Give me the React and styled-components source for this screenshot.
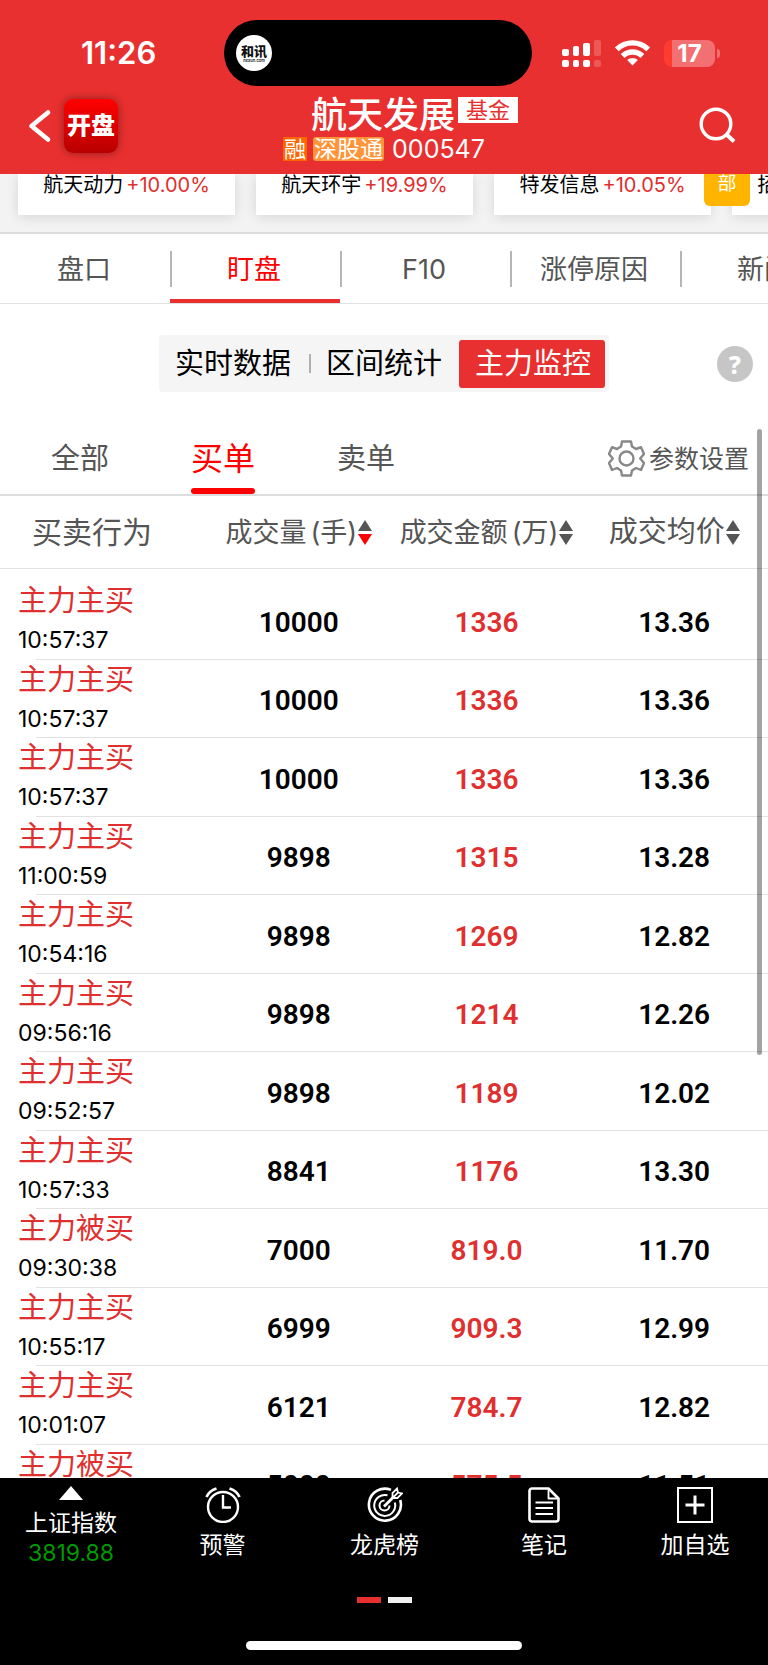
import React from 'react';
import styled, { createGlobalStyle, css } from 'styled-components';

const RED = '#e93030';
const BRIGHT = '#ff0000';
const INK = '#555555';

const Global = createGlobalStyle`
  * { box-sizing: border-box; }
  body { margin: 0; background: #fff; }
  body, button { font-family: Inter, "Noto Sans CJK SC", sans-serif; }
  button { border: 0; padding: 0; background: none; color: inherit; font-size: inherit; cursor: pointer; white-space: nowrap; }
  a { color: inherit; text-decoration: none; }
  svg { display: block; flex: none; }
`;

const Screen = styled.div`
  display: flex;
  flex-direction: column;
  height: 100vh;
  overflow: hidden;
`;

const Header = styled.header`
  flex: none;
  background: ${RED};
  color: #fff;
`;

const StatusBar = styled.div`
  display: grid;
  grid-template-columns: 1fr 308px 1fr;
  align-items: center;
  padding: 20px 12px 0 0;
`;

const Clock = styled.time`
  padding-left: 81px;
  font-size: 31px;
  font-weight: 600;
  line-height: 36px;
`;

const Island = styled.div`
  display: flex;
  align-items: center;
  height: 66px;
  padding-left: 12px;
  border-radius: 33px;
  background: #000;
`;

const IslandLogo = styled.div`
  display: flex;
  flex-direction: column;
  align-items: center;
  justify-content: center;
  width: 36px;
  height: 36px;
  border-radius: 50%;
  background: #fff;
  color: #111;
  font-size: 13px;
  font-weight: 900;
  line-height: 14px;
  small { font-size: 4px; font-weight: 600; line-height: 5px; }
`;

const StatusIcons = styled.div`
  display: flex;
  align-items: center;
  justify-content: space-between;
  width: 158px;
  margin-left: 30px;
`;

const Battery = styled.div`
  display: flex;
  align-items: center;
  gap: 2px;
`;

const BatteryBody = styled.div`
  width: 51px;
  height: 27px;
  border-radius: 8px;
  background: linear-gradient(90deg, #ff3b30 8px, #f27072 8px);
  text-align: center;
  font-size: 24px;
  font-weight: 700;
  line-height: 27px;
`;

const BatteryTip = styled.div`
  width: 3px;
  height: 9px;
  border-radius: 0 4px 4px 0;
  background: #f27072;
`;

const NavBar = styled.div`
  display: grid;
  grid-template-columns: 1fr auto 1fr;
  height: 88px;
`;

const NavLeft = styled.div`
  display: flex;
  align-items: center;
  gap: 12px;
  padding-left: 28px;
  padding-bottom: 8px;
`;

const AppBadge = styled.div`
  width: 54px;
  height: 54px;
  border-radius: 9px;
  background: linear-gradient(#ff0000, #b80000);
  box-shadow: 0 0 8px rgba(0, 0, 0, 0.4);
  text-align: center;
  font-size: 24px;
  font-weight: 900;
  line-height: 54px;
`;

const NavRight = styled.div`
  display: flex;
  align-items: center;
  justify-content: flex-end;
  padding-right: 32px;
  padding-bottom: 10px;
`;

const StockTitle = styled.div`
  display: flex;
  flex-direction: column;
  align-items: center;
  padding-top: 9px;
`;

const TitleLine = styled.div`
  display: flex;
  gap: 3px;
  padding-left: 61px;
  h1 { margin: 0; font-size: 36px; font-weight: 500; line-height: 40px; }
`;

const FundTag = styled.span`
  width: 60px;
  height: 26px;
  margin-top: 2px;
  background: #fff;
  color: ${RED};
  text-align: center;
  font-size: 22px;
  line-height: 26px;
`;

const CodeLine = styled.div`
  display: flex;
  align-items: center;
  gap: 6px;
  padding-top: 1px;
  font-size: 25px;
  line-height: 26px;
`;

const Mark = styled.span`
  height: 24px;
  padding: 0 1px;
  border-radius: ${(p) => (p.$hot ? 0 : 3)}px;
  background: ${(p) => (p.$hot ? '#ff6600' : '#ff9438')};
  font-size: ${(p) => (p.$hot ? 22 : 23)}px;
  line-height: 24px;
`;

const Code = styled.span`
  margin-left: 2px;
`;

const Content = styled.main`
  position: relative;
  flex: 1;
  min-height: 0;
  overflow: hidden;
`;

const Peers = styled.div`
  position: relative;
  display: flex;
  gap: 21px;
  height: 60px;
  padding-left: 18px;
  overflow: hidden;
  border-bottom: 2px solid #dcdcdc;
  background: #f3f3f3;
`;

const PeerCard = styled.a`
  flex: none;
  display: flex;
  justify-content: center;
  gap: 3px;
  width: 217px;
  height: 41px;
  background: #fff;
  box-shadow: 0 2px 12px rgba(0, 0, 0, 0.12);
  color: #000;
  font-size: 20px;
  line-height: 22px;
  span { color: #e02f2f; }
`;

const SectionTag = styled.button`
  position: absolute;
  top: 0;
  right: 18px;
  width: 46px;
  height: 32px;
  border-radius: 0 0 6px 6px;
  background: #ffb400;
  color: #fff;
  font-size: 19px;
  line-height: 20px;
  padding-bottom: 12px;
`;

const Tabs = styled.nav`
  display: flex;
  height: 70px;
  overflow: hidden;
  border-bottom: 1px solid #e2e2e2;
`;

const Tab = styled.button`
  flex: none;
  display: grid;
  grid-template-rows: 1fr 4px;
  width: 170px;
  color: ${(p) => (p.$active ? BRIGHT : INK)};
  font-size: 27px;
  span {
    align-self: center;
    margin-top: 4px;
    padding: 2px 4px 0 0;
    line-height: 34px;
    border-left: 2px solid ${(p) => (p.$first ? 'transparent' : '#b5b5b5')};
  }
  &::after {
    content: '';
    background: ${(p) => (p.$active ? RED : 'transparent')};
  }
`;

const SegmentRow = styled.div`
  display: grid;
  grid-template-columns: 1fr auto 1fr;
  align-items: center;
  padding: 31px 15px 0;
`;

const Segments = styled.div`
  grid-column: 2;
  display: flex;
  align-items: center;
  height: 57px;
  padding: 0 4px 0 16px;
  border-radius: 4px;
  background: #f5f5f5;
`;

const Segment = styled.button`
  color: #000;
  font-size: 29px;
  line-height: 48px;
  ${(p) =>
    p.$active &&
    css`
      margin-left: 17px;
      padding: 0 14px 0 16px;
      border-radius: 3px;
      background: ${RED};
      color: #fff;
    `}
`;

const SegmentRule = styled.i`
  width: 2px;
  height: 19px;
  margin: 0 15px 0 18px;
  background: #b0b0b0;
`;

const Help = styled.button`
  justify-self: end;
  width: 36px;
  height: 36px;
  border-radius: 50%;
  background: #c6c6c6;
  color: #fff;
  font-family: "Noto Sans", sans-serif;
  font-size: 25px;
  font-weight: 800;
  line-height: 36px;
`;

const FilterBar = styled.div`
  display: flex;
  align-items: flex-end;
  height: 104px;
  padding: 0 19px 0 51px;
  border-bottom: 2px solid #dddddd;
`;

const Filter = styled.button`
  margin-right: 82px;
  padding-bottom: 17px;
  color: ${INK};
  font-size: 29px;
  line-height: 36px;
  ${(p) =>
    p.$active &&
    css`
      padding-bottom: 0;
      color: ${BRIGHT};
      font-size: 32px;
      &::after {
        content: '';
        display: block;
        height: 6px;
        margin-top: 11px;
        border-radius: 3px;
        background: ${BRIGHT};
      }
    `}
`;

const Settings = styled.button`
  display: flex;
  align-items: center;
  gap: 4px;
  margin-left: auto;
  padding-bottom: 17px;
  color: ${INK};
  font-size: 25px;
  line-height: 36px;
`;

const Trades = styled.table`
  width: 100%;
  table-layout: fixed;
  border-collapse: collapse;
  tbody::before { content: ''; display: block; height: 12px; }
`;

const HeadCell = styled.th`
  width: ${(p) => (p.$lead ? '205px' : 'auto')};
  height: 72px;
  padding: ${(p) => (p.$lead ? '0 0 0 32px' : 0)};
  border-bottom: 1px solid #e2e2e2;
  color: ${INK};
  text-align: ${(p) => (p.$lead ? 'left' : 'center')};
  font-size: ${(p) => (p.$lead ? 30 : 27)}px;
  font-weight: 400;
  line-height: 36px;
`;

const SortButton = styled.button`
  display: inline-flex;
  align-items: center;
  gap: 1px;
  padding-top: 2px;
  font-size: ${(p) => (p.$large ? 29 : 27)}px;
  line-height: 36px;
`;

const Unit = styled.span`
  margin-left: 4px;
`;

const Row = styled.tr`
  height: 78px;
  background: linear-gradient(#e2e2e2, #e2e2e2) no-repeat 36px 100% / 100% 1px;
  &:nth-child(odd) { height: 79px; }
`;

const ActionCell = styled.td`
  padding: 0 0 0 18px;
  vertical-align: top;
  color: #e02f2f;
  font-size: 29px;
  line-height: 40px;
  time { display: block; color: #000; font-size: 23px; line-height: 38px; }
`;

const NumberCell = styled.td`
  padding: 4px 0 0;
  text-align: center;
  color: ${(p) => (p.$red ? '#e02f2f' : '#000')};
  font-family: Roboto, sans-serif;
  font-size: 28px;
  font-weight: 600;
`;

const ScrollThumb = styled.div`
  position: absolute;
  top: 255px;
  right: 6px;
  width: 5px;
  height: 48%;
  border-radius: 3px;
  background: rgba(0, 0, 0, 0.36);
`;

const Footer = styled.footer`
  flex: none;
  background: #000;
  color: #fff;
`;

const Actions = styled.div`
  display: grid;
  grid-template-columns: 142fr 161fr 163fr 156fr 146fr;
  height: 108px;
`;

const Action = styled.button`
  display: flex;
  flex-direction: column;
  align-items: center;
  padding-top: 9px;
  font-size: 23px;
  line-height: 28px;
  svg + span { margin-top: 8px; }
`;

const IndexAction = styled(Action)`
  padding-top: 8px;
  svg + span { margin-top: 9px; }
  b { color: #009900; font-size: 23px; font-weight: 400; line-height: 32px; }
`;

const Pager = styled.div`
  display: flex;
  justify-content: center;
  gap: 7px;
  padding-top: 11px;
`;

const Dash = styled.i`
  width: 24px;
  height: 6px;
  background: ${(p) => (p.$active ? RED : '#f0f0f0')};
`;

const HomeBar = styled.div`
  width: 36%;
  height: 9px;
  margin: 38px auto 15px;
  border-radius: 5px;
  background: #fff;
`;

const SignalIcon = () => (
  <svg width="39" height="27" viewBox="0 0 39 27" fill="#fff">
    <rect x="0" y="9" width="7" height="7" rx="2" />
    <rect x="11" y="6" width="6" height="10" rx="2" />
    <rect x="21" y="3" width="7" height="13" rx="2" />
    <rect x="32" y="0" width="7" height="16" rx="2" opacity=".2" />
    <rect x="0" y="20" width="7" height="7" rx="2" />
    <rect x="11" y="20" width="6" height="7" rx="2" />
    <rect x="21" y="20" width="7" height="7" rx="2" />
    <rect x="32" y="20" width="7" height="7" rx="2" opacity=".2" />
  </svg>
);

const WifiIcon = () => (
  <svg width="35" height="26" viewBox="0 0 35 26" fill="none" stroke="#fff" strokeWidth="5.4">
    <path d="M1.8 9.3a22.4 22.4 0 0 1 31.4 0" />
    <path d="M7.6 16a14.2 14.2 0 0 1 19.8 0" />
    <path d="M17.5 25.5l-5.3-5.4a7.6 7.6 0 0 1 10.6 0z" fill="#fff" stroke="none" />
  </svg>
);

const BackIcon = () => (
  <svg width="24" height="34" viewBox="0 0 24 34" fill="none" stroke="#fff" strokeWidth="4.6" strokeLinecap="round" strokeLinejoin="round">
    <path d="M20 3.5L3.5 17 20 30.5" />
  </svg>
);

const SearchIcon = () => (
  <svg width="37" height="37" viewBox="0 0 37 37" fill="none" stroke="#fff" strokeWidth="3.4">
    <circle cx="17" cy="17" r="14.8" />
    <path d="M27 27l8 7.5" strokeWidth="4" />
  </svg>
);

const GearIcon = () => (
  <svg width="37" height="37" viewBox="0 0 37 37" fill="none" stroke="#888" strokeWidth="2.4" strokeLinejoin="round">
    <path d="M14 1.5H23L24 6.5L28 9L33 7.2L36 14L32.2 18.5L36 23L33 30L28 28L24 30.5L23 35.5H14L13 30.5L9 28L4 30L1 23L4.8 18.5L1 14L4 7.2L9 9L13 6.5Z" />
    <circle cx="18.5" cy="18.5" r="7" />
  </svg>
);

const SortIcon = ({ down = INK }) => (
  <svg width="14" height="25" viewBox="0 0 14 25">
    <path d="M7 0l7 11H0z" fill={INK} />
    <path d="M7 25l7-11H0z" fill={down} />
  </svg>
);

const UpIcon = () => (
  <svg width="24" height="14" viewBox="0 0 24 14" fill="#fff"><path d="M12 0l12 14H0z" /></svg>
);

const AlarmIcon = () => (
  <svg width="36" height="36" viewBox="0 0 36 36" fill="none" stroke="#fff" strokeWidth="2.4">
    <circle cx="18" cy="20" r="15" />
    <path d="M18 8v12.5h8" />
    <path d="M1.5 10Q4 4 11.500 1.5M34.5 10Q32 4 24.5 1.5" strokeWidth="2.8" />
  </svg>
);

const TargetIcon = () => (
  <svg width="36" height="36" viewBox="0 0 36 36" fill="none" stroke="#fff" strokeWidth="2.6">
    <path d="M24 2.9A16 16 0 1 0 33.2 13" />
    <path d="M20.5 8.3A10.5 10.5 0 1 0 27.8 15.5" strokeWidth="2" />
    <path d="M17.5 13.5A5 5 0 1 0 22.5 18.5" strokeWidth="2" />
    <path d="M17 19.5L27 9.5" strokeWidth="2.8" />
    <path d="M25.5 10.5V6L30 1.5L31 5.5L35 6.5L30.5 11H25.5L31 5.5" strokeWidth="1.8" />
  </svg>
);

const NoteIcon = () => (
  <svg width="32" height="36" viewBox="0 0 32 36" fill="none" stroke="#fff" strokeWidth="2.6" strokeLinejoin="round">
    <path d="M4 1.5H20.5L30.5 11.5V32a2.5 2.5 0 0 1-2.5 2.5H4A2.5 2.5 0 0 1 1.5 32V4A2.5 2.5 0 0 1 4 1.5z" />
    <path d="M20.5 1.5V11.5H30.5" strokeWidth="1.8" />
    <path d="M7.5 15.5H25M7.5 21H25M7.5 27H25" strokeWidth="2" />
  </svg>
);

const AddIcon = () => (
  <svg width="36" height="36" viewBox="0 0 36 36" fill="none" stroke="#fff" strokeWidth="2">
    <rect x="1" y="1" width="34" height="34" />
    <path d="M18 8.5V27.5M8.5 18H27.5" strokeWidth="3" />
  </svg>
);

const peers = [
  ['航天动力', '+10.00%'],
  ['航天环宇', '+19.99%'],
  ['特发信息', '+10.05%'],
  ['招商轮船', '+10.02%'],
];

const tabs = ['盘口', '盯盘', 'F10', '涨停原因', '新闻'];

const trades = [
  ['主力主买', '10:57:37', '10000', '1336', '13.36'],
  ['主力主买', '10:57:37', '10000', '1336', '13.36'],
  ['主力主买', '10:57:37', '10000', '1336', '13.36'],
  ['主力主买', '11:00:59', '9898', '1315', '13.28'],
  ['主力主买', '10:54:16', '9898', '1269', '12.82'],
  ['主力主买', '09:56:16', '9898', '1214', '12.26'],
  ['主力主买', '09:52:57', '9898', '1189', '12.02'],
  ['主力主买', '10:57:33', '8841', '1176', '13.30'],
  ['主力被买', '09:30:38', '7000', '819.0', '11.70'],
  ['主力主买', '10:55:17', '6999', '909.3', '12.99'],
  ['主力主买', '10:01:07', '6121', '784.7', '12.82'],
  ['主力被买', '09:31:02', '5000', '575.5', '11.51'],
];

const actions = [
  ['预警', AlarmIcon],
  ['龙虎榜', TargetIcon],
  ['笔记', NoteIcon],
  ['加自选', AddIcon],
];

export default function App() {
  return (
    <Screen>
      <Global />
      <Header>
        <StatusBar>
          <Clock>11:26</Clock>
          <Island>
            <IslandLogo>和讯<small>hexun.com</small></IslandLogo>
          </Island>
          <StatusIcons>
            <SignalIcon />
            <WifiIcon />
            <Battery>
              <BatteryBody>17</BatteryBody>
              <BatteryTip />
            </Battery>
          </StatusIcons>
        </StatusBar>
        <NavBar>
          <NavLeft>
            <button aria-label="返回"><BackIcon /></button>
            <AppBadge>开盘</AppBadge>
          </NavLeft>
          <StockTitle>
            <TitleLine>
              <h1>航天发展</h1>
              <FundTag>基金</FundTag>
            </TitleLine>
            <CodeLine>
              <Mark $hot>融</Mark>
              <Mark>深股通</Mark>
              <Code>000547</Code>
            </CodeLine>
          </StockTitle>
          <NavRight>
            <button aria-label="搜索"><SearchIcon /></button>
          </NavRight>
        </NavBar>
      </Header>

      <Content>
        <Peers>
          {peers.map(([name, change]) => (
            <PeerCard key={name} href="#">{name}<span>{change}</span></PeerCard>
          ))}
          <SectionTag>部</SectionTag>
        </Peers>
        <Tabs>
          {tabs.map((t, i) => (
            <Tab key={t} $first={i === 0} $active={i === 1}><span>{t}</span></Tab>
          ))}
        </Tabs>
        <SegmentRow>
          <Segments>
            <Segment>实时数据</Segment>
            <SegmentRule />
            <Segment>区间统计</Segment>
            <Segment $active>主力监控</Segment>
          </Segments>
          <Help aria-label="帮助">?</Help>
        </SegmentRow>
        <FilterBar>
          <Filter>全部</Filter>
          <Filter $active>买单</Filter>
          <Filter>卖单</Filter>
          <Settings><GearIcon />参数设置</Settings>
        </FilterBar>
        <Trades>
          <thead>
            <tr>
              <HeadCell $lead>买卖行为</HeadCell>
              <HeadCell>
                <SortButton><span>成交量<Unit>(手)</Unit></span><SortIcon down={BRIGHT} /></SortButton>
              </HeadCell>
              <HeadCell>
                <SortButton><span>成交金额<Unit>(万)</Unit></span><SortIcon /></SortButton>
              </HeadCell>
              <HeadCell>
                <SortButton $large>成交均价<SortIcon /></SortButton>
              </HeadCell>
            </tr>
          </thead>
          <tbody>
            {trades.map(([kind, time, volume, amount, price], i) => (
              <Row key={i}>
                <ActionCell>{kind}<time>{time}</time></ActionCell>
                <NumberCell>{volume}</NumberCell>
                <NumberCell $red>{amount}</NumberCell>
                <NumberCell>{price}</NumberCell>
              </Row>
            ))}
          </tbody>
        </Trades>
        <ScrollThumb />
      </Content>

      <Footer>
        <Actions>
          <IndexAction><UpIcon /><span>上证指数</span><b>3819.88</b></IndexAction>
          {actions.map(([label, Icon]) => (
            <Action key={label}><Icon /><span>{label}</span></Action>
          ))}
        </Actions>
        <Pager><Dash $active /><Dash /></Pager>
        <HomeBar />
      </Footer>
    </Screen>
  );
}
